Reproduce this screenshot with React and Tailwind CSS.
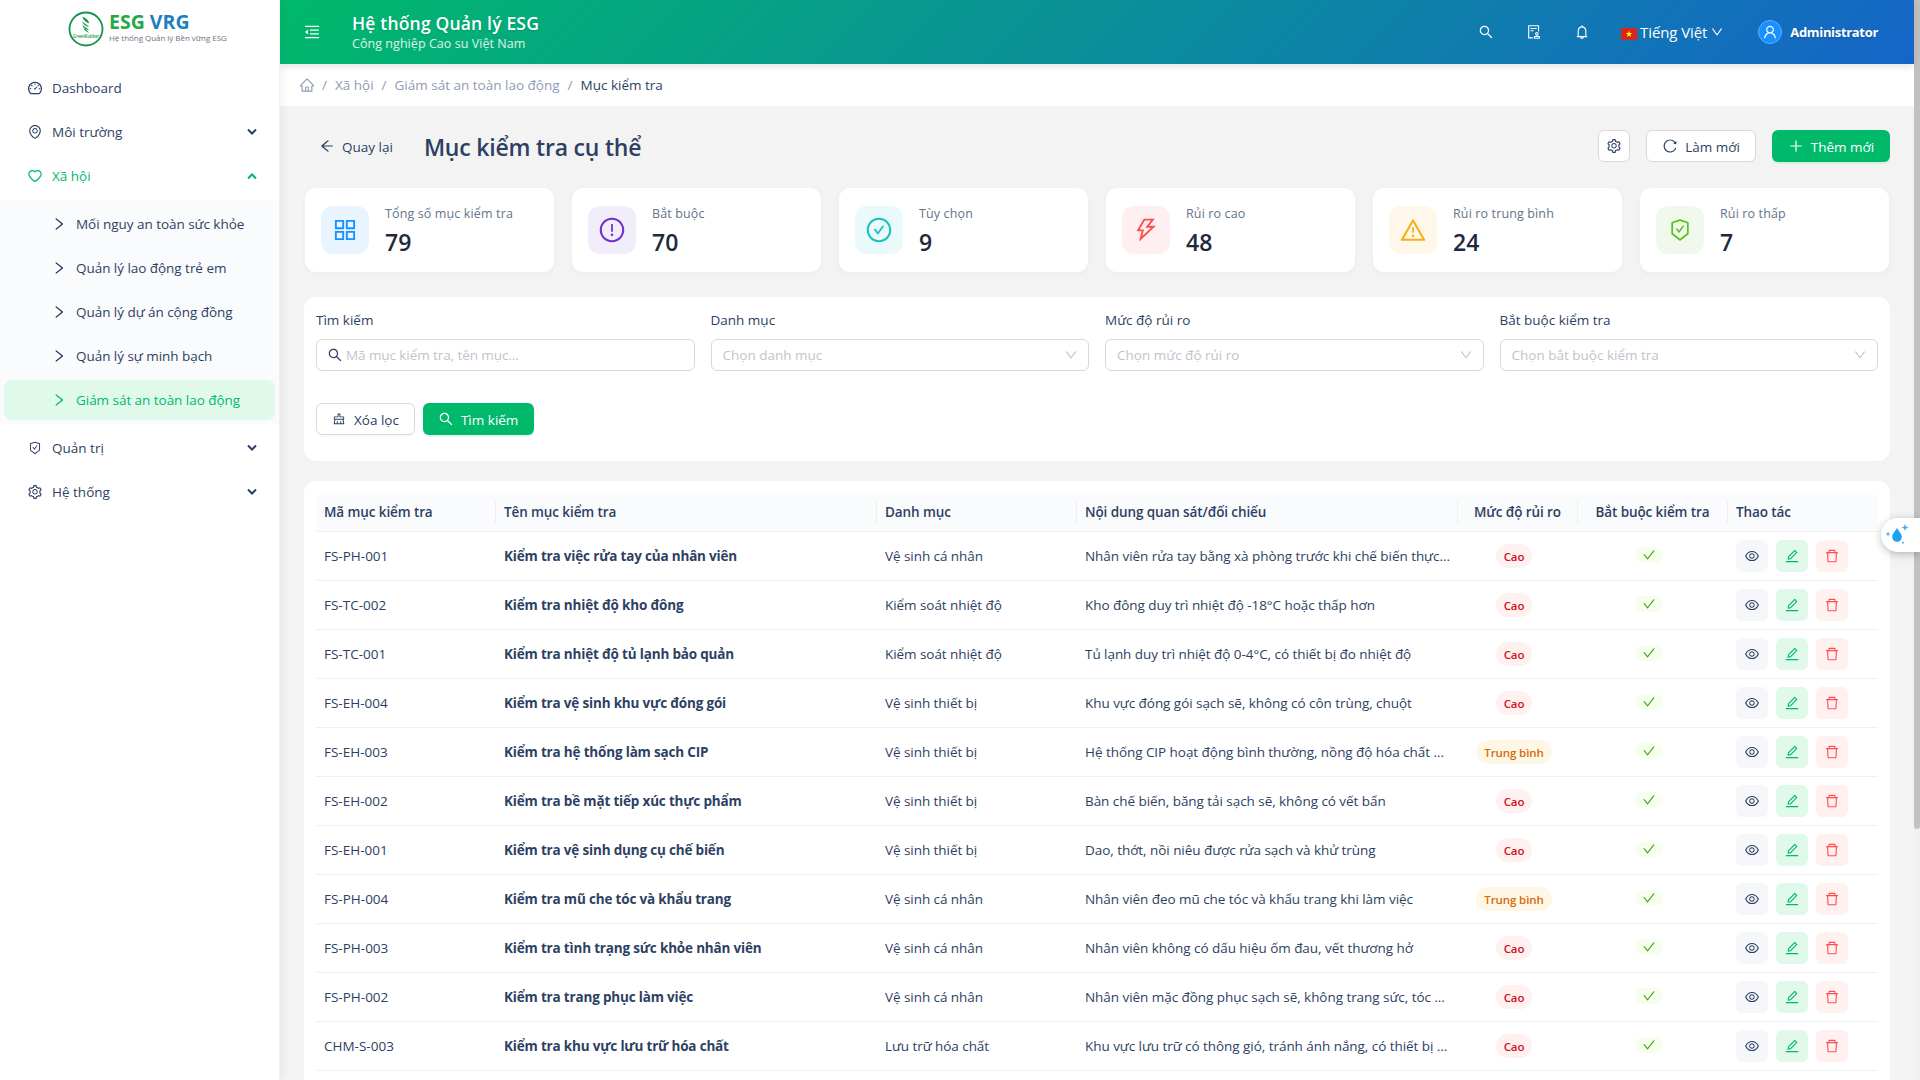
import React from 'react';
import {
  AiOutlineDashboard, AiOutlineEnvironment, AiOutlineHeart, AiOutlineSafetyCertificate, AiOutlineSetting,
  AiOutlineRight, AiOutlineDown, AiOutlineMenuFold, AiOutlineSearch, AiOutlineAudit, AiOutlineBell,
  AiOutlineUser, AiOutlineHome, AiOutlineArrowLeft, AiOutlineReload, AiOutlinePlus, AiOutlineAppstore,
  AiOutlineExclamationCircle, AiOutlineCheckCircle, AiOutlineThunderbolt, AiOutlineWarning, AiOutlineClear,
  AiOutlineCheck, AiOutlineEye, AiOutlineEdit, AiOutlineDelete,
} from 'react-icons/ai';

const subMenu = [
  { label: "Mối nguy an toàn sức khỏe" },
  { label: "Quản lý lao động trẻ em" },
  { label: "Quản lý dự án cộng đồng" },
  { label: "Quản lý sự minh bạch" },
  { label: "Giám sát an toàn lao động", active: true },
];

const stats = [
  { label: "Tổng số mục kiểm tra", value: 79, icon: AiOutlineAppstore, color: "bg-[#e8f4ff] text-[#1890ff]" },
  { label: "Bắt buộc", value: 70, icon: AiOutlineExclamationCircle, color: "bg-[#f1edfb] text-[#722ed1]" },
  { label: "Tùy chọn", value: 9, icon: AiOutlineCheckCircle, color: "bg-[#eaf9f9] text-[#13c2c2]" },
  { label: "Rủi ro cao", value: 48, icon: AiOutlineThunderbolt, color: "bg-[#ffeff0] text-[#ff4d4f]" },
  { label: "Rủi ro trung bình", value: 24, icon: AiOutlineWarning, color: "bg-[#fff8ea] text-[#faad14]" },
  { label: "Rủi ro thấp", value: 7, icon: AiOutlineSafetyCertificate, iconClass: "p-0.5", color: "bg-[#f1f9ed] text-[#52c41a]" },
];

const filters = [
  { label: "Danh mục", placeholder: "Chọn danh mục" },
  { label: "Mức độ rủi ro", placeholder: "Chọn mức độ rủi ro" },
  { label: "Bắt buộc kiểm tra", placeholder: "Chọn bắt buộc kiểm tra" },
];

const rows = [
  { code: "FS-PH-001", name: "Kiểm tra việc rửa tay của nhân viên", category: "Vệ sinh cá nhân", content: "Nhân viên rửa tay bằng xà phòng trước khi chế biến thực...", risk: "Cao" },
  { code: "FS-TC-002", name: "Kiểm tra nhiệt độ kho đông", category: "Kiểm soát nhiệt độ", content: "Kho đông duy trì nhiệt độ -18°C hoặc thấp hơn", risk: "Cao" },
  { code: "FS-TC-001", name: "Kiểm tra nhiệt độ tủ lạnh bảo quản", category: "Kiểm soát nhiệt độ", content: "Tủ lạnh duy trì nhiệt độ 0-4°C, có thiết bị đo nhiệt độ", risk: "Cao" },
  { code: "FS-EH-004", name: "Kiểm tra vệ sinh khu vực đóng gói", category: "Vệ sinh thiết bị", content: "Khu vực đóng gói sạch sẽ, không có côn trùng, chuột", risk: "Cao" },
  { code: "FS-EH-003", name: "Kiểm tra hệ thống làm sạch CIP", category: "Vệ sinh thiết bị", content: "Hệ thống CIP hoạt động bình thường, nồng độ hóa chất ...", risk: "Trung bình" },
  { code: "FS-EH-002", name: "Kiểm tra bề mặt tiếp xúc thực phẩm", category: "Vệ sinh thiết bị", content: "Bàn chế biến, băng tải sạch sẽ, không có vết bẩn", risk: "Cao" },
  { code: "FS-EH-001", name: "Kiểm tra vệ sinh dụng cụ chế biến", category: "Vệ sinh thiết bị", content: "Dao, thớt, nồi niêu được rửa sạch và khử trùng", risk: "Cao" },
  { code: "FS-PH-004", name: "Kiểm tra mũ che tóc và khẩu trang", category: "Vệ sinh cá nhân", content: "Nhân viên đeo mũ che tóc và khẩu trang khi làm việc", risk: "Trung bình" },
  { code: "FS-PH-003", name: "Kiểm tra tình trạng sức khỏe nhân viên", category: "Vệ sinh cá nhân", content: "Nhân viên không có dấu hiệu ốm đau, vết thương hở", risk: "Cao" },
  { code: "FS-PH-002", name: "Kiểm tra trang phục làm việc", category: "Vệ sinh cá nhân", content: "Nhân viên mặc đồng phục sạch sẽ, không trang sức, tóc ...", risk: "Cao" },
  { code: "CHM-S-003", name: "Kiểm tra khu vực lưu trữ hóa chất", category: "Lưu trữ hóa chất", content: "Khu vực lưu trữ có thông gió, tránh ánh nắng, có thiết bị ...", risk: "Cao" },
];

const columns = "grid grid-cols-[180px_381px_200px_381px_120px_150px_150px]";

function Caret({ up }) {
  return (
    <svg className={`size-2.5 ${up ? "rotate-180" : ""}`} viewBox="0 0 10 10" fill="none" stroke="currentColor" strokeWidth="2">
      <path d="M1 2.500l4 4 4-4" />
    </svg>
  );
}

function Logo() {
  return (
    <div className="flex h-[58px] items-center pl-[68px]">
      <svg className="size-[36px] shrink-0" viewBox="0 0 36 36" fill="none">
        <circle cx="18" cy="18" r="16.500" stroke="#15934a" strokeWidth="1.800" />
        <g fill="#15934a">
          <path d="M14.500 5.800c3 1 6 3.200 6.800 6.700-3.200-1.200-6.300-3.200-6.800-6.700z" />
          <path d="M14.300 9.600c.8 2.600 4 3.400 7 6.400-3.400-.6-7-2.600-7-6.400z" />
          <path d="M14.300 13c.8 2.600 4 3.200 7 6.200-3.400-.4-7-2.400-7-6.200z" />
          <path d="M15.500 17.300c2.200.8 4.200 2.200 5.500 5.200-1.800-1.800-4.300-2.600-5.500-5.200z" />
        </g>
        <text x="18" y="26.800" fontSize="4.600" fontWeight="600" textLength="26" lengthAdjust="spacingAndGlyphs" textAnchor="middle" fill="#15934a">GreenRubber</text>
      </svg>
      <div className="-mt-[3px] ml-[5px]">
        <div className="text-[19.5px] leading-[20px] font-bold text-[#28a745]">
          ESG <span className="text-[#1f7fc0]">VRG</span>
        </div>
        <div className="text-[8px] leading-[11px] tracking-[-0.04px] whitespace-nowrap text-[#6b7280]">Hệ thống Quản lý Bền vững ESG</div>
      </div>
    </div>
  );
}

function MenuItem({ icon: Icon, iconClass = "", label, open, caret = true }) {
  return (
    <div className={`flex h-10 items-center pr-[22px] pl-[27px] ${open ? "text-[#00b96b]" : "text-[#2d3f63]"}`}>
      <Icon className={`size-4 ${iconClass}`} />
      <span className="ml-[9px] flex-1">{label}</span>
      {caret && <Caret up={open} />}
    </div>
  );
}

function Sidebar() {
  return (
    <aside className="z-10 w-[280px] shrink-0 border-r border-[#f0f0f0] bg-white shadow-[2px_0_8px_rgba(0,0,0,0.06)]">
      <Logo />
      <nav className="flex flex-col gap-1 pt-2.5">
        <MenuItem icon={AiOutlineDashboard} label="Dashboard" caret={false} />
        <MenuItem icon={AiOutlineEnvironment} label="Môi trường" />
        <MenuItem icon={AiOutlineHeart} label="Xã hội" open />
        <div className="flex flex-col gap-1 bg-[#fafbfd] p-1">
          {subMenu.map((item) => (
            <div
              key={item.label}
              className={`flex h-10 items-center rounded-lg pl-[47px] tracking-[-0.04px] ${item.active ? "bg-[#e1f9eb] text-[#00b96b]" : "text-[#2d3f63]"}`}
            >
              <AiOutlineRight className="size-4" />
              <span className="ml-[9px]">{item.label}</span>
            </div>
          ))}
        </div>
        <MenuItem icon={AiOutlineSafetyCertificate} iconClass="p-px" label="Quản trị" />
        <MenuItem icon={AiOutlineSetting} label="Hệ thống" />
      </nav>
    </aside>
  );
}

function Header() {
  return (
    <header className="z-[5] flex h-16 shrink-0 items-center bg-linear-135/srgb from-[#00b96b] to-[#1565c8] pr-9 pl-[23px] text-white shadow-[0_2px_8px_rgba(0,0,0,0.12)]">
      <AiOutlineMenuFold className="size-[18px]" />
      <div className="ml-[31px]">
        <div className="text-[17.5px] leading-6 font-semibold tracking-[0.18px] text-shadow-[0_1px_2px_rgba(0,0,0,0.1)]">Hệ thống Quản lý ESG</div>
        <div className="text-[12.5px] leading-[18px] tracking-[0.05px] text-white/85">Công nghiệp Cao su Việt Nam</div>
      </div>
      <div className="ml-auto flex items-center">
        <AiOutlineSearch className="size-4" />
        <AiOutlineAudit className="ml-8 size-4" />
        <AiOutlineBell className="ml-8 size-4" />
        <svg className="mt-1 ml-[31px] h-3 w-4" viewBox="0 0 16 12">
          <rect width="16" height="12" fill="#da251d" />
          <path d="M8 2.800l.8 2.300h2.400L9.300 6.500l.7 2.400-2-1.400-2 1.400.7-2.400-1.900-1.400h2.400z" fill="#ff0" />
        </svg>
        <span className="ml-[3px] pt-px text-[15px] tracking-[-0.1px]">Tiếng Việt</span>
        <AiOutlineDown className="ml-[3px] size-3.5" />
        <div className="ml-[34px] flex size-6 items-center justify-center rounded-full border border-[#5cb0ff] bg-[#1890ff]">
          <AiOutlineUser className="size-4" />
        </div>
        <span className="ml-2 pt-px text-[13px] font-bold tracking-[-0.32px] text-shadow-[0_1px_2px_rgba(0,0,0,0.2)]">Administrator</span>
      </div>
    </header>
  );
}

function StatCard({ label, value, icon: Icon, iconClass = "", color }) {
  return (
    <div className="flex h-[86px] items-center rounded-xl border border-[#f0f2f5] bg-white px-4 shadow-[0_1px_3px_rgba(0,0,0,0.04)]">
      <div className={`flex size-12 items-center justify-center rounded-xl ${color}`}>
        <Icon className={`size-7 ${iconClass}`} />
      </div>
      <div className="ml-4 pt-0.5">
        <div className="text-[12.5px] leading-5 font-medium tracking-[0.13px] text-[#64748b]">{label}</div>
        <div className="mt-0.5 text-[23px] leading-8 font-semibold text-[#1e293b]">{value}</div>
      </div>
    </div>
  );
}

function Filters() {
  return (
    <section className="mt-6 h-[164px] rounded-xl bg-white px-3 pt-3">
      <div className="grid grid-cols-4 gap-4">
        <div>
          <div className="leading-[22px]">Tìm kiếm</div>
          <div className="mt-2 flex h-8 items-center rounded-md border border-[#d9d9d9] px-2.5">
            <AiOutlineSearch className="size-4" />
            <span className="ml-[3px] tracking-[-0.08px] text-[#bfc4cd]">Mã mục kiểm tra, tên mục...</span>
          </div>
        </div>
        {filters.map((filter) => (
          <div key={filter.label}>
            <div className="leading-[22px]">{filter.label}</div>
            <div className="mt-2 flex h-8 items-center justify-between rounded-md border border-[#d9d9d9] pr-2.5 pl-[11px] text-[#bfc4cd]">
              <span>{filter.placeholder}</span>
              <AiOutlineDown className="size-3.5" />
            </div>
          </div>
        ))}
      </div>
      <div className="mt-8 flex gap-2">
        <button className="flex h-8 items-center gap-2 rounded-md border border-[#d9d9d9] px-[15px] shadow-[0_2px_0_rgba(0,0,0,0.02)]">
          <AiOutlineClear className="size-3.5" />
          <span className="pt-0.5">Xóa lọc</span>
        </button>
        <button className="flex h-8 items-center gap-[7px] rounded-md bg-[#00b96b] pr-4 pl-[15px] text-white shadow-[0_2px_0_rgba(0,185,107,0.1)]">
          <AiOutlineSearch className="size-4" />
          <span className="pt-0.5">Tìm kiếm</span>
        </button>
      </div>
    </section>
  );
}

function RowActions() {
  return (
    <div className="flex gap-2 pl-2">
      <button className="flex size-8 items-center justify-center rounded-md bg-[#f5f7fa]"><AiOutlineEye className="size-4" /></button>
      <button className="flex size-8 items-center justify-center rounded-md bg-[#e1f9eb] text-[#00b96b]"><AiOutlineEdit className="size-4" /></button>
      <button className="flex size-8 items-center justify-center rounded-md bg-[#fff1f0] text-[#ff4d4f]"><AiOutlineDelete className="size-4" /></button>
    </div>
  );
}

function ChecklistTable() {
  return (
    <section className="mt-5 flex-1 rounded-t-xl bg-white px-3 pt-3">
      <div className={`${columns} h-[39px] items-center rounded-t-lg border-b border-[#f0f0f0] bg-[#fafbfd] text-[13.5px] font-semibold tracking-[-0.1px]`}>
        <div className="flex h-[23px] items-center border-r border-[#f0f0f0] pl-2">Mã mục kiểm tra</div>
        <div className="flex h-[23px] items-center border-r border-[#f0f0f0] pl-2">Tên mục kiểm tra</div>
        <div className="flex h-[23px] items-center border-r border-[#f0f0f0] pl-2">Danh mục</div>
        <div className="flex h-[23px] items-center border-r border-[#f0f0f0] pl-2">Nội dung quan sát/đối chiếu</div>
        <div className="flex h-[23px] items-center justify-center border-r border-[#f0f0f0]">Mức độ rủi ro</div>
        <div className="flex h-[23px] items-center justify-center border-r border-[#f0f0f0]">Bắt buộc kiểm tra</div>
        <div className="flex h-[23px] items-center pl-2">Thao tác</div>
      </div>
      {rows.map((row) => (
        <div key={row.code} className={`${columns} h-[49px] items-center border-b border-[#f0f0f0]`}>
          <div className="pl-2">{row.code}</div>
          <div className="pl-2 font-bold tracking-[-0.18px]">{row.name}</div>
          <div className="pl-2 tracking-[-0.06px]">{row.category}</div>
          <div className="pl-2 tracking-[-0.05px] whitespace-nowrap">{row.content}</div>
          <div className="flex justify-center pr-2">
            <span className={`flex h-6 items-center rounded-full px-2 pt-px text-[11.5px] font-semibold tracking-[-0.1px] ${
              row.risk === "Cao" ? "bg-[#fff1f0] text-[#cf1322]" : "bg-[#fff7e6] text-[#d46b08]"
            }`}>
              {row.risk}
            </span>
          </div>
          <div className="flex justify-center pr-2">
            <span className="-mt-0.5 flex h-4 w-7 items-center justify-center rounded-full bg-[#f6ffed] text-[#389e0d]">
              <AiOutlineCheck className="size-3.5" />
            </span>
          </div>
          <RowActions />
        </div>
      ))}
      <div className={`${columns} h-[49px] items-center`}>
        <div className="col-start-7">
          <RowActions />
        </div>
      </div>
    </section>
  );
}

function App() {
  return (
    <div className="relative flex h-[1080px] w-[1920px] overflow-hidden bg-[#f3f3f3] font-['Open_Sans','Noto_Sans',sans-serif] text-[13.5px] text-[#2d3f63]">
      <Sidebar />
      <div className="flex w-[1634px] flex-col">
        <Header />
        <div className="flex h-[42px] shrink-0 items-center bg-white pl-[19px] text-[#8f9bb3]">
          <AiOutlineHome className="size-4" />
          <span className="mr-2 ml-[7px]">/</span>
          <span>Xã hội</span>
          <span className="mx-2">/</span>
          <span>Giám sát an toàn lao động</span>
          <span className="mx-2">/</span>
          <span className="text-[#2d3f63]">Mục kiểm tra</span>
        </div>
        <main className="flex flex-1 flex-col px-6 pt-6">
          <div className="flex h-8 items-center">
            <AiOutlineArrowLeft className="ml-[15px] size-4" />
            <span className="ml-[7px] pt-0.5">Quay lại</span>
            <h1 className="ml-[31px] pt-0.5 text-[23px] font-semibold tracking-[-0.2px]">Mục kiểm tra cụ thể</h1>
            <div className="ml-auto flex gap-4">
              <button className="flex size-8 items-center justify-center rounded-md border border-[#d9d9d9] bg-white"><AiOutlineSetting className="size-4" /></button>
              <button className="flex h-8 w-[110px] items-center justify-center gap-[7px] rounded-md border border-[#d9d9d9] bg-white">
                <AiOutlineReload className="size-4" />
                <span className="pt-0.5">Làm mới</span>
              </button>
              <button className="flex h-8 w-[118px] items-center justify-center gap-[7px] rounded-md bg-[#00b96b] text-white shadow-[0_2px_0_rgba(0,185,107,0.1)]">
                <AiOutlinePlus className="size-4" />
                <span className="pt-0.5">Thêm mới</span>
              </button>
            </div>
          </div>
          <div className="mt-[25px] grid grid-cols-6 gap-4">
            {stats.map((stat) => <StatCard key={stat.label} {...stat} />)}
          </div>
          <Filters />
          <ChecklistTable />
        </main>
      </div>
      <div className="w-1.5 bg-[#f1f1f1]">
        <div className="h-[829px] rounded-b bg-[#c1c1c1]"></div>
      </div>
      <div className="absolute top-[518px] right-0 z-20 flex h-[34px] w-[39px] items-center rounded-l-full bg-white pl-1 shadow-[0_2px_8px_rgba(0,0,0,0.25)]">
        <svg className="size-6" viewBox="0 0 24 24" fill="#1da1f2">
          <path d="M12 5c2 3.500 4.800 6 4.800 9a4.800 4.800 0 0 1-9.600 0c0-3 2.800-5.500 4.800-9z" />
          <path d="M20 1l1 2.500 2.500 1-2.500 1L20 8l-1-2.500-2.500-1 2.500-1zM3 8.500l.7 1.800 1.800.7-1.800.7L3 13.500l-.7-1.800L.5 11l1.800-.7zM18 18l.5 1.200 1.200.5-1.200.5-.5 1.200-.5-1.200-1.200-.5 1.200-.5z" opacity=".85" />
        </svg>
      </div>
    </div>
  );
}

export default App;
